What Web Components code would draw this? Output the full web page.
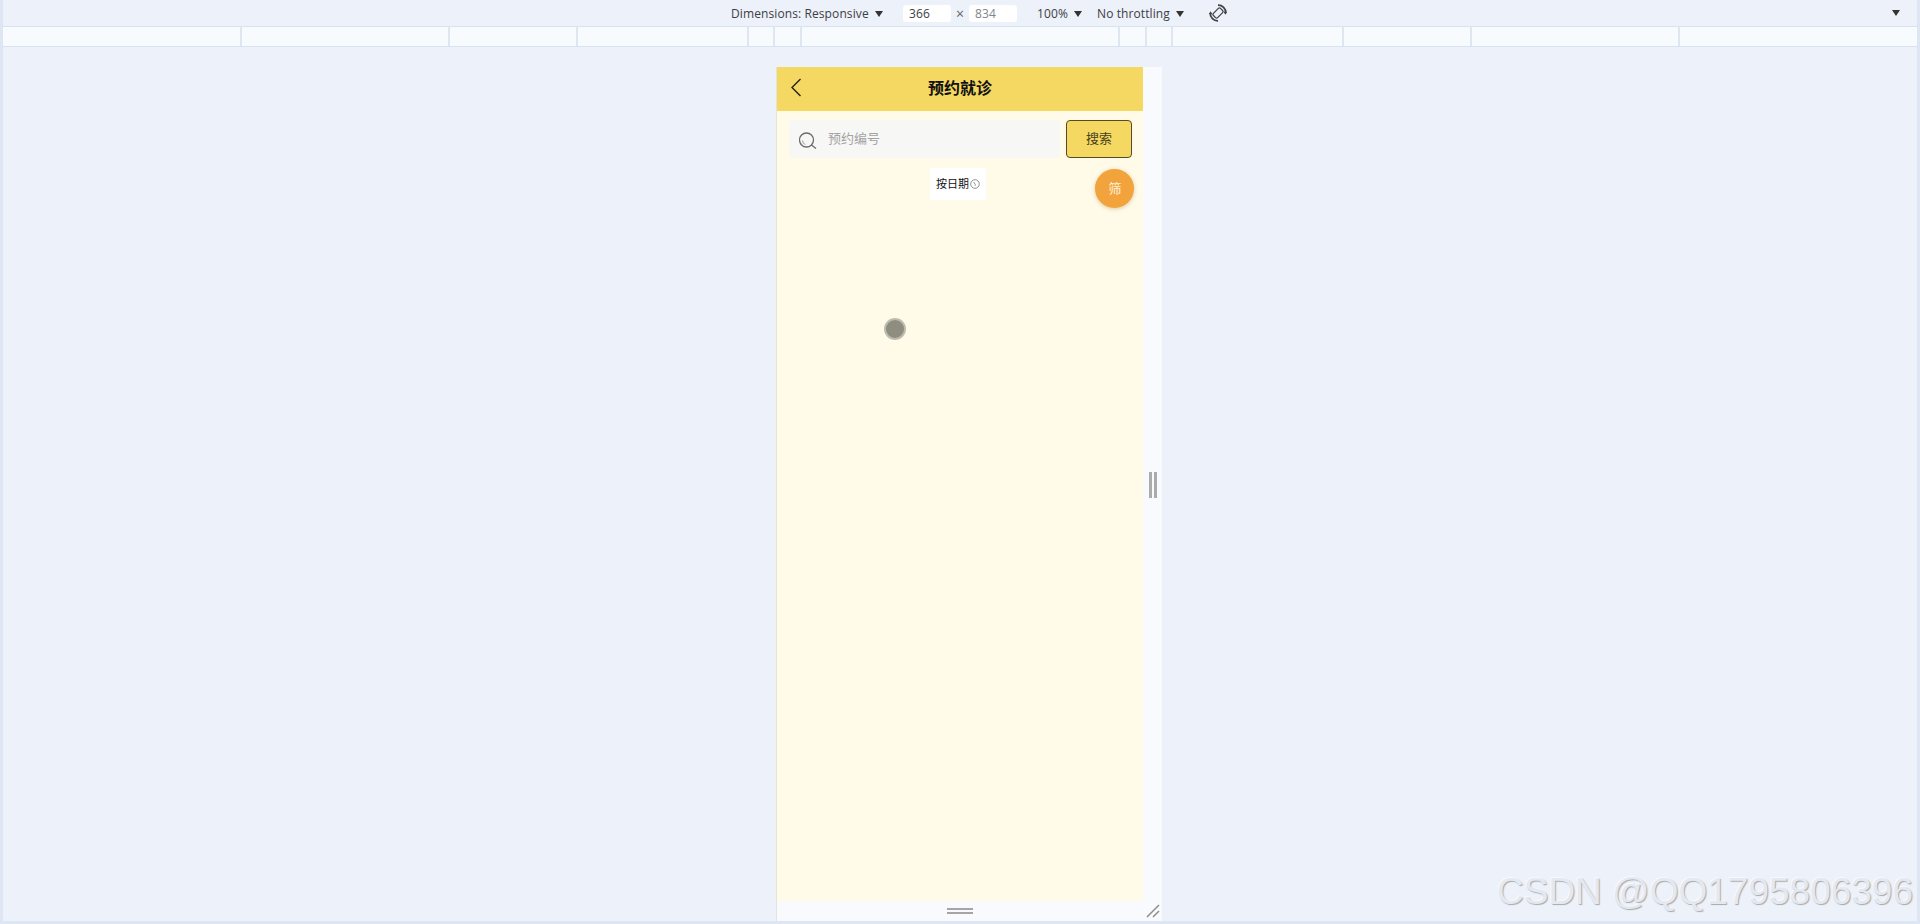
<!DOCTYPE html>
<html lang="zh">
<head>
<meta charset="utf-8">
<title>预约就诊</title>
<style>
  html, body { margin: 0; height: 100%; }
  body { overflow: hidden; background: #edf1fa; }
</style>
</head>
<body>
<devtools-shell>
  <device-toolbar slot="toolbar"></device-toolbar>
  <media-ruler slot="ruler"></media-ruler>
  <device-frame slot="stage">
    <app-header title="预约就诊"></app-header>
    <search-bar placeholder="预约编号" action="搜索"></search-bar>
    <date-filter label="按日期" fab="筛"></date-filter>
  </device-frame>
</devtools-shell>
<touch-cursor></touch-cursor>
<csdn-watermark>CSDN @QQ1795806396</csdn-watermark>

<script>
const CJK = '"Noto Sans CJK SC", "Noto Sans", sans-serif';

class DevtoolsShell extends HTMLElement {
  constructor() {
    super();
    this.attachShadow({ mode: "open" });
  }
  connectedCallback() {
    this.shadowRoot.innerHTML = `
      <style>
        :host {
          display: flex;
          flex-direction: column;
          height: 924px;
          box-sizing: border-box;
          padding: 0 3px 3px;
          background: #edf1fa;
          box-shadow: inset 3px 0 0 #dfe6f3, inset -3px 0 0 #dfe6f3, inset 0 -3px 0 #dfe6f3;
        }
      </style>
      <slot name="toolbar"></slot>
      <slot name="ruler"></slot>
      <slot name="stage"></slot>
    `;
  }
}
customElements.define("devtools-shell", DevtoolsShell);

class DeviceToolbar extends HTMLElement {
  constructor() {
    super();
    this.attachShadow({ mode: "open" });
  }
  connectedCallback() {
    this.shadowRoot.innerHTML = `
      <style>
        :host {
          display: flex;
          align-items: center;
          height: 26px;
          padding-left: 728px;
          padding-right: 17px;
          font: 12px "Open Sans", sans-serif;
          letter-spacing: 0.1px;
          color: #3c4043;
        }
        .caret {
          display: inline-block;
          width: 0;
          height: 0;
          margin-left: 6px;
          border-left: 4px solid transparent;
          border-right: 4px solid transparent;
          border-top: 6px solid #333;
        }
        .item { display: flex; align-items: center; white-space: nowrap; padding-top: 1px; }
        .num {
          box-sizing: border-box;
          width: 48px;
          height: 17px;
          padding-left: 6px;
          background: #fff;
          border-radius: 3px;
          line-height: 17px;
        }
        .num.off { color: #80868b; }
        .times { width: 18px; text-align: center; color: #5f6368; font-size: 14px; }
        svg { display: block; }
        .end { margin-left: auto; }
      </style>
      <span class="item" style="width:172px">Dimensions: Responsive<i class="caret"></i></span>
      <span class="num">366</span>
      <span class="times">×</span>
      <span class="num off">834</span>
      <span class="item" style="margin-left:20px;width:60px">100%<i class="caret"></i></span>
      <span class="item" style="width:112px">No throttling<i class="caret"></i></span>
      <svg width="18" height="18" viewBox="0 0 18 18" fill="none" stroke="#444">
        <g transform="rotate(45 9 9)">
          <rect x="6" y="4" width="6" height="10" rx="1.5" stroke-width="1.3"/>
          <path d="M3.5 3.5 A7.5 7.5 0 0 1 14.5 3.5" stroke-width="1.8"/>
          <path d="M14.5 14.5 A7.5 7.5 0 0 1 3.5 14.5" stroke-width="1.8"/>
          <path d="M14.8 1.5 L15.4 5 L12 4.2Z M3.2 16.5 L2.6 13 L6 13.8Z" fill="#444" stroke="none"/>
        </g>
      </svg>
      <i class="caret end"></i>
    `;
  }
}
customElements.define("device-toolbar", DeviceToolbar);

class MediaRuler extends HTMLElement {
  constructor() {
    super();
    this.attachShadow({ mode: "open" });
  }
  connectedCallback() {
    // widths of the media query segments, left to right
    const widths = [239, 208, 128, 171, 26, 27, 318, 27, 26, 171, 128, 208, 238];
    this.shadowRoot.innerHTML = `
      <style>
        :host {
          display: flex;
          height: 19px;
          background: #f8fbfe;
          border-top: 1px solid #d9e2f1;
          border-bottom: 1px solid #d9e2f1;
        }
        div { box-sizing: border-box; flex: none; border-right: 2px solid #dfe6f3; }
        div:last-child { border-right: 0; flex: 1; }
      </style>
      ${widths.map((w) => `<div style="width:${w}px"></div>`).join("")}
    `;
  }
}
customElements.define("media-ruler", MediaRuler);

class DeviceFrame extends HTMLElement {
  constructor() {
    super();
    this.attachShadow({ mode: "open" });
  }
  connectedCallback() {
    this.shadowRoot.innerHTML = `
      <style>
        :host {
          display: grid;
          grid-template-columns: 366px 19px;
          grid-template-rows: 834px 20px;
          width: 385px;
          margin: 20px 0 0 774px;
          box-shadow: -1px 0 0 #e4e3d8;
        }
        .view {
          display: flex;
          flex-direction: column;
          background: #fffbe8;
          overflow: hidden;
        }
        .right {
          display: flex;
          align-items: center;
          justify-content: center;
          gap: 2px;
          padding-top: 2px;
          background: #f8fafd;
        }
        .right i { width: 3px; height: 26px; background: #ababab; }
        .bottom {
          grid-column: 1 / 3;
          position: relative;
          display: flex;
          flex-direction: column;
          align-items: center;
          justify-content: center;
          gap: 2px;
          padding-right: 19px;
          background: #f8fafd;
        }
        .bottom i { width: 26px; height: 2px; background: #a5a5a5; }
        .bottom svg { position: absolute; right: 2px; bottom: 3px; }
      </style>
      <div class="view"><slot></slot></div>
      <div class="right"><i></i><i></i></div>
      <div class="bottom">
        <i></i><i></i>
        <svg width="14" height="14" viewBox="0 0 14 14" stroke="#8e8e8e" stroke-width="1.5">
          <path d="M1 13 L13 1 M7 13 L13 7"/>
        </svg>
      </div>
    `;
  }
}
customElements.define("device-frame", DeviceFrame);

class AppHeader extends HTMLElement {
  constructor() {
    super();
    this.attachShadow({ mode: "open" });
  }
  connectedCallback() {
    this.shadowRoot.innerHTML = `
      <style>
        :host {
          display: flex;
          align-items: center;
          justify-content: center;
          position: relative;
          flex: none;
          height: 44px;
          background: #f4d862;
          font: bold 16px ${CJK};
          color: #111;
        }
        span { padding-bottom: 4px; }
        svg { position: absolute; left: 13px; top: 11px; }
      </style>
      <svg width="12" height="19" viewBox="0 0 12 19" fill="none" stroke="#222" stroke-width="1.4">
        <path d="M10.5 1 L2 9.5 L10.5 18"/>
      </svg>
      <span>${this.getAttribute("title")}</span>
    `;
  }
}
customElements.define("app-header", AppHeader);

class SearchBar extends HTMLElement {
  constructor() {
    super();
    this.attachShadow({ mode: "open" });
  }
  connectedCallback() {
    this.shadowRoot.innerHTML = `
      <style>
        :host {
          display: flex;
          flex: none;
          gap: 6px;
          height: 38px;
          padding: 9px 11px 0 12px;
          font: 13px ${CJK};
        }
        .field {
          display: flex;
          align-items: center;
          flex: 1;
          gap: 11px;
          padding-left: 10px;
          background: #f7f7f5;
          border-radius: 4px;
          color: #a3a3a3;
        }
        .field span { padding-bottom: 3px; }
        button {
          width: 66px;
          padding: 0 0 3px;
          background: #f4d862;
          border: 1px solid #5a4a22;
          border-radius: 4px;
          font: inherit;
          color: #4a4020;
        }
        svg { display: block; }
      </style>
      <div class="field">
        <svg width="18" height="20" viewBox="0 0 18 20" fill="none" stroke="#6c6c6c" stroke-width="1.3">
          <circle cx="7.5" cy="11" r="7"/>
          <path d="M12.5 16 L17 19.5"/>
          <path d="M3.5 11.5 A4.5 4.5 0 0 0 6.5 15.5" stroke="#b5b5b5"/>
        </svg>
        <span>${this.getAttribute("placeholder")}</span>
      </div>
      <button>${this.getAttribute("action")}</button>
    `;
  }
}
customElements.define("search-bar", SearchBar);

class DateFilter extends HTMLElement {
  constructor() {
    super();
    this.attachShadow({ mode: "open" });
  }
  connectedCallback() {
    this.shadowRoot.innerHTML = `
      <style>
        :host {
          display: block;
          position: relative;
          padding-top: 10px;
          font: 11px ${CJK};
        }
        .chip {
          display: flex;
          align-items: center;
          justify-content: center;
          width: 56px;
          height: 32px;
          margin-left: 153px;
          background: #fff;
          color: #111;
        }
        .chip span { padding-bottom: 2px; }
        .chip svg { margin-left: 1px; }
        .fab {
          position: absolute;
          right: 9px;
          top: 11px;
          display: flex;
          align-items: center;
          justify-content: center;
          box-sizing: border-box;
          width: 39px;
          height: 39px;
          padding: 0 0 3px 1px;
          border-radius: 50%;
          background: #f3a33c;
          box-shadow: 0 1px 4px rgba(160, 110, 30, 0.35);
          color: #fff3dc;
          font-size: 13px;
        }
      </style>
      <div class="chip">
        <span>${this.getAttribute("label")}</span>
        <svg width="10" height="10" viewBox="0 0 10 10" fill="none" stroke="#777" stroke-width="0.8">
          <circle cx="5" cy="5" r="4.3"/>
          <path d="M3.6 3 L5.2 5.2 L5.2 6.8"/>
        </svg>
      </div>
      <div class="fab">${this.getAttribute("fab")}</div>
    `;
  }
}
customElements.define("date-filter", DateFilter);

class TouchCursor extends HTMLElement {
  constructor() {
    super();
    this.attachShadow({ mode: "open" });
  }
  connectedCallback() {
    this.shadowRoot.innerHTML = `
      <style>
        :host {
          position: absolute;
          left: 884px;
          top: 318px;
          box-sizing: border-box;
          width: 22px;
          height: 22px;
          border-radius: 50%;
          background: #8e8d80;
          border: 2px solid #bdbcb0;
        }
      </style>
    `;
  }
}
customElements.define("touch-cursor", TouchCursor);

class CsdnWatermark extends HTMLElement {
  constructor() {
    super();
    this.attachShadow({ mode: "open" });
  }
  connectedCallback() {
    this.shadowRoot.innerHTML = `
      <style>
        :host {
          position: absolute;
          left: 1497px;
          top: 871px;
          font: 37px/42px "Liberation Sans", sans-serif;
          white-space: nowrap;
          color: #e4e8f0;
          text-shadow: 1px 1px 1px #a8a8a8, -1px -1px 0 #f8f9fd;
        }
      </style>
      <slot></slot>
    `;
  }
}
customElements.define("csdn-watermark", CsdnWatermark);
</script>
</body>
</html>
